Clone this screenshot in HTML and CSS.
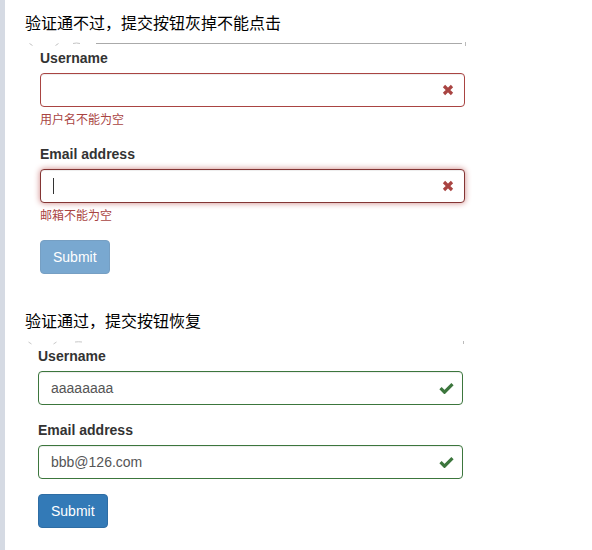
FILE: index.html
```html
<!DOCTYPE html>
<html lang="zh-CN">
<head>
<meta charset="utf-8">
<title>表单验证</title>
<link rel="stylesheet" href="styles.css">
</head>
<body>
<div class="page">
  <div class="rail"></div>
  <main class="main">
    <section class="demo">
      <h3 class="title">验证通不过，提交按钮灰掉不能点击</h3>
      <svg class="divider" width="445" height="5" viewBox="0 0 445 5">
        <path d="M4.5 1.5L7.5 3.5" stroke="#c4c4c4" stroke-width="1" fill="none"/>
        <path d="M30.5 3.5L33.5 1.5" stroke="#c4c4c4" stroke-width="1" fill="none"/>
        <path d="M48 1.5Q51.5 0.5 55 1.5" stroke="#c4c4c4" stroke-width="1" fill="none"/>
        <line x1="71" y1="1.5" x2="437" y2="1.5" stroke="#aaa" stroke-width="1"/>
        <line x1="440.5" y1="0" x2="440.5" y2="4" stroke="#bbb" stroke-width="1"/>
      </svg>
      <form class="form form-a">
        <div class="form-group has-error">
          <label>Username</label>
          <div class="field">
            <input class="input" type="text" value="">
            <span class="feedback">
              <svg width="12" height="12" viewBox="0 0 12 12"><path d="M2 2L10 10M10 2L2 10" stroke="#a94442" stroke-width="3.2" fill="none"/></svg>
            </span>
          </div>
          <div class="help">用户名不能为空</div>
        </div>
        <div class="form-group has-error">
          <label>Email address</label>
          <div class="field">
            <input class="input focused" type="text" value="">
            <span class="caret"></span>
            <span class="feedback">
              <svg width="12" height="12" viewBox="0 0 12 12"><path d="M2 2L10 10M10 2L2 10" stroke="#a94442" stroke-width="3.2" fill="none"/></svg>
            </span>
          </div>
          <div class="help">邮箱不能为空</div>
        </div>
        <button class="btn btn-disabled" type="button" disabled>Submit</button>
      </form>
    </section>

    <section class="demo demo-second">
      <h3 class="title">验证通过，提交按钮恢复</h3>
      <svg class="divider" width="445" height="5" viewBox="0 0 445 5">
        <path d="M3.5 2L6.5 4" stroke="#c8c8c8" stroke-width="1" fill="none"/>
        <path d="M28.5 4L31.5 2" stroke="#c8c8c8" stroke-width="1" fill="none"/>
        <path d="M50 2Q53.5 1.5 57 2" stroke="#c8c8c8" stroke-width="1" fill="none"/>
        <line x1="438.5" y1="1" x2="438.5" y2="4" stroke="#bbb" stroke-width="1"/>
      </svg>
      <form class="form form-b">
        <div class="form-group has-success">
          <label>Username</label>
          <div class="field">
            <input class="input" type="text" value="aaaaaaaa">
            <span class="feedback">
              <svg width="15" height="11" viewBox="0 0 15 11"><path d="M1.5 5.2L5.5 9.2L13.5 1.2" stroke="#3c763d" stroke-width="3.2" fill="none"/></svg>
            </span>
          </div>
        </div>
        <div class="form-group has-success">
          <label>Email address</label>
          <div class="field">
            <input class="input" type="text" value="bbb@126.com">
            <span class="feedback">
              <svg width="15" height="11" viewBox="0 0 15 11"><path d="M1.5 5.2L5.5 9.2L13.5 1.2" stroke="#3c763d" stroke-width="3.2" fill="none"/></svg>
            </span>
          </div>
        </div>
        <button class="btn btn-primary" type="button">Submit</button>
      </form>
    </section>
  </main>
</div>
</body>
</html>
```

FILE: styles.css
```css
html, body {
  margin: 0;
  padding: 0;
  background: #fff;
}
body {
  font-family: "Liberation Sans", Arial, "Noto Sans CJK SC", sans-serif;
  font-size: 14px;
  line-height: 20px;
  color: #333;
}
.page {
  display: flex;
  min-height: 100vh;
}
.rail {
  flex: none;
  width: 5px;
  background: #d5dae3;
}
.main {
  padding: 10px 0 0 20px;
}
.title {
  margin: 0;
  font-family: "Noto Sans CJK SC", sans-serif;
  font-size: 16px;
  font-weight: normal;
  line-height: 24px;
  color: #000;
}
.divider {
  display: block;
  margin-top: 8px;
}
.demo-second {
  margin-top: 34px;
}
.form {
  width: 425px;
}
.form-a {
  margin-top: 1px;
  padding-left: 15px;
}
.form-b {
  margin-top: 1px;
  padding-left: 13px;
}
.form-group {
  margin-bottom: 15px;
}
.form-group label {
  display: block;
  font-weight: bold;
  line-height: 20px;
  margin-bottom: 5px;
}
.field {
  position: relative;
}
.input {
  display: block;
  box-sizing: border-box;
  width: 100%;
  height: 34px;
  margin: 0;
  padding: 6px 12px;
  font-family: "Liberation Sans", Arial, sans-serif;
  font-size: 14px;
  line-height: 20px;
  color: #555;
  background: #fff;
  border: 1px solid #ccc;
  border-radius: 4px;
  box-shadow: inset 0 1px 1px rgba(0, 0, 0, .075);
  outline: none;
}
.has-error .input {
  border-color: #a94442;
}
.has-error .input.focused {
  border-color: #843534;
  box-shadow: inset 0 1px 1px rgba(0, 0, 0, .075), 0 0 6px #ce8483;
}
.has-success .input {
  border-color: #3c763d;
}
.caret {
  position: absolute;
  left: 13px;
  top: 9px;
  width: 1px;
  height: 16px;
  background: #333;
}
.feedback {
  position: absolute;
  right: 0;
  top: 0;
  width: 34px;
  height: 34px;
  display: flex;
  align-items: center;
  justify-content: center;
}
.feedback svg {
  display: block;
}
.help {
  margin-top: 5px;
  font-size: 12px;
  line-height: 17px;
  color: #a94442;
}
.btn {
  display: block;
  box-sizing: border-box;
  height: 34px;
  padding: 6px 12px;
  font-family: "Liberation Sans", Arial, sans-serif;
  font-size: 14px;
  line-height: 20px;
  color: #fff;
  border: 1px solid #2e6da4;
  border-radius: 4px;
  background: #337ab7;
}
.btn-disabled {
  opacity: .65;
}
```
